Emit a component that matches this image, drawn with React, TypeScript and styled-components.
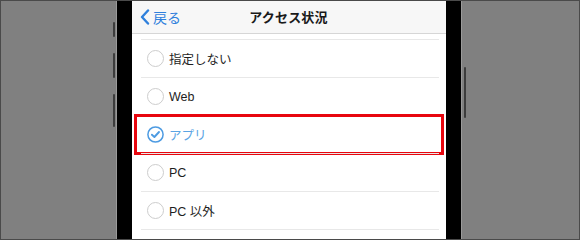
import React from "react";
import styled, { createGlobalStyle } from "styled-components";

const Global = createGlobalStyle`
  html, body { margin: 0; padding: 0; background: #808080; }
  body { font-family: "Liberation Sans", "Noto Sans CJK JP", sans-serif; }
  * { box-sizing: border-box; }
`;

const Frame = styled.div`
  width: 580px;
  height: 240px;
  display: flex;
  border: 1px solid #4a4a4a;
  background: #808080;
  overflow: hidden;
`;

const Side = styled.div<{ $right?: boolean }>`
  flex: ${(p) => (p.$right ? "1" : "0 0 116px")};
  display: flex;
  flex-direction: column;
  align-items: ${(p) => (p.$right ? "flex-start" : "flex-end")};
  padding-top: ${(p) => (p.$right ? "66px" : "21px")};
  gap: ${(p) => (p.$right ? "0" : "16px")};
  border-${(p) => (p.$right ? "left" : "right")}: 1px solid #9a9a9a;
  padding-${(p) => (p.$right ? "left" : "right")}: 1px;
`;

const SideButton = styled.div<{ $h: number }>`
  width: 2px;
  height: ${(p) => p.$h}px;
  background: #3c3c3c;
  border-radius: 1px;
  margin-left: 1px;
`;

const Bezel = styled.div`
  flex: 0 0 ${(p: { $w: number }) => p.$w}px;
  background: #000;
`;

const Screen = styled.div`
  flex: 0 0 314px;
  background: #fff;
  display: flex;
  flex-direction: column;
`;

const Header = styled.div`
  height: 33px;
  flex: 0 0 33px;
  background: #f7f7f7;
  border-bottom: 1px solid #d6d6d6;
  display: grid;
  grid-template-columns: 1fr auto 1fr;
  align-items: center;
  padding: 0 9px 1px 8px;
`;

const Back = styled.div`
  display: flex;
  align-items: center;
  gap: 3px;
  color: #2f80dc;
  font-size: 14px;
`;

const Title = styled.div`
  font-size: 13px;
  font-weight: bold;
  color: #1a1a1a;
  letter-spacing: 0.2px;
`;

const List = styled.div`
  padding: 5px 7px 0 9px;
  display: flex;
  flex-direction: column;
`;

const Row = styled.div<{ $active?: boolean }>`
  position: relative;
  height: 38px;
  border-top: 1px solid #e8e8e8;
  display: flex;
  align-items: center;
  gap: 5px;
  padding-left: 6px;
  font-size: 12.5px;
  color: ${(p) => (p.$active ? "#5aa4e4" : "#1e1e1e")};
`;

const Highlight = styled.div`
  position: absolute;
  top: -2px;
  bottom: -2px;
  left: -7px;
  right: -5px;
  border: 3.5px solid #e8060e;
`;

const Radio = styled.div`
  width: 17px;
  height: 17px;
  border-radius: 50%;
  border: 1.3px solid #cdcdcd;
  background: #fff;
`;

const Check = () => (
  <svg width="17" height="17" viewBox="0 0 17 17">
    <circle cx="8.5" cy="8.5" r="7.6" fill="none" stroke="#4d9be2" strokeWidth="1.5" />
    <path d="M4.9 8.7 L7.4 11 L12 6" fill="none" stroke="#4d9be2" strokeWidth="1.9" strokeLinecap="round" strokeLinejoin="round" />
  </svg>
);

const items = ["指定しない", "Web", "アプリ", "PC", "PC 以外"];

export default function App() {
  return (
    <>
      <Global />
      <Frame>
        <Side>
          <SideButton $h={15} />
          <SideButton $h={25} />
          <SideButton $h={33} />
        </Side>
        <Bezel $w={15} />
        <Screen>
          <Header>
            <Back>
              <svg width="10" height="16" viewBox="0 0 10 16">
                <path d="M8 1.5 L2 8 L8 14.5" fill="none" stroke="#2f80dc" strokeWidth="2.4" strokeLinecap="round" strokeLinejoin="round" />
              </svg>
              <span>戻る</span>
            </Back>
            <Title>アクセス状況</Title>
            <span />
          </Header>
          <List>
            {items.map((t, i) => (
              <Row key={t} $active={i === 2}>
                {i === 2 ? <Check /> : <Radio />}
                <span>{t}</span>
                {i === 2 && <Highlight />}
              </Row>
            ))}
            <Row />
          </List>
        </Screen>
        <Bezel $w={15} />
        <Side $right>
          <SideButton $h={51} />
        </Side>
      </Frame>
    </>
  );
}
